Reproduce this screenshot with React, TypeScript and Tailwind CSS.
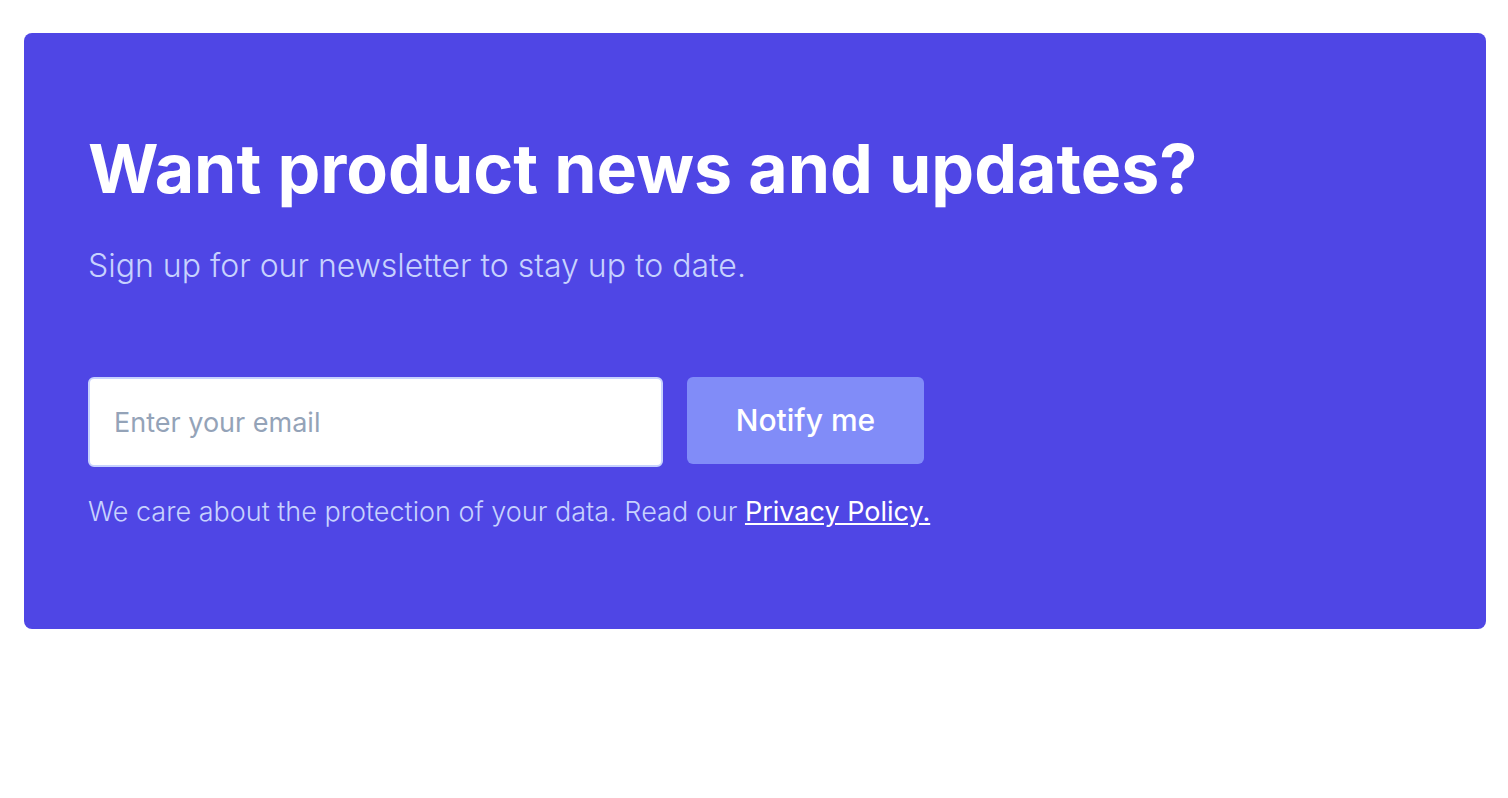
export default function App() {
  return (
    <div className="min-h-screen bg-white pl-6 pr-[22px] pt-[33px] font-['Inter',sans-serif]">
      <div className="rounded-lg bg-[#4f46e5] px-16 pt-[101px] pb-[104px]">
        <h2 className="text-[68px] font-bold leading-none tracking-normal text-white">
          Want product news and updates?
        </h2>
        <p className="mt-[48px] text-[32px] font-light leading-none text-[#c7d2fe]">
          Sign up for our newsletter to stay up to date.
        </p>
        <form className="mt-[95px] flex items-start gap-6" onSubmit={(e) => e.preventDefault()}>
          <input
            type="email"
            placeholder="Enter your email"
            className="h-[90px] w-[575px] rounded-md border-2 border-[#c7d2fe] bg-white px-6 text-[27px] text-gray-900 outline-none placeholder:text-[#94a3b8]"
          />
          <button
            type="submit"
            className="h-[87px] w-[237px] rounded-md bg-[#818cf8] text-[30px] font-medium text-white"
          >
            Notify me
          </button>
        </form>
        <p className="mt-[31px] text-[27px] font-light leading-none text-[#c7d2fe]">
          We care about the protection of your data. Read our{' '}
          <a href="#" className="font-normal text-white underline">
            Privacy Policy.
          </a>
        </p>
      </div>
    </div>
  )
}
